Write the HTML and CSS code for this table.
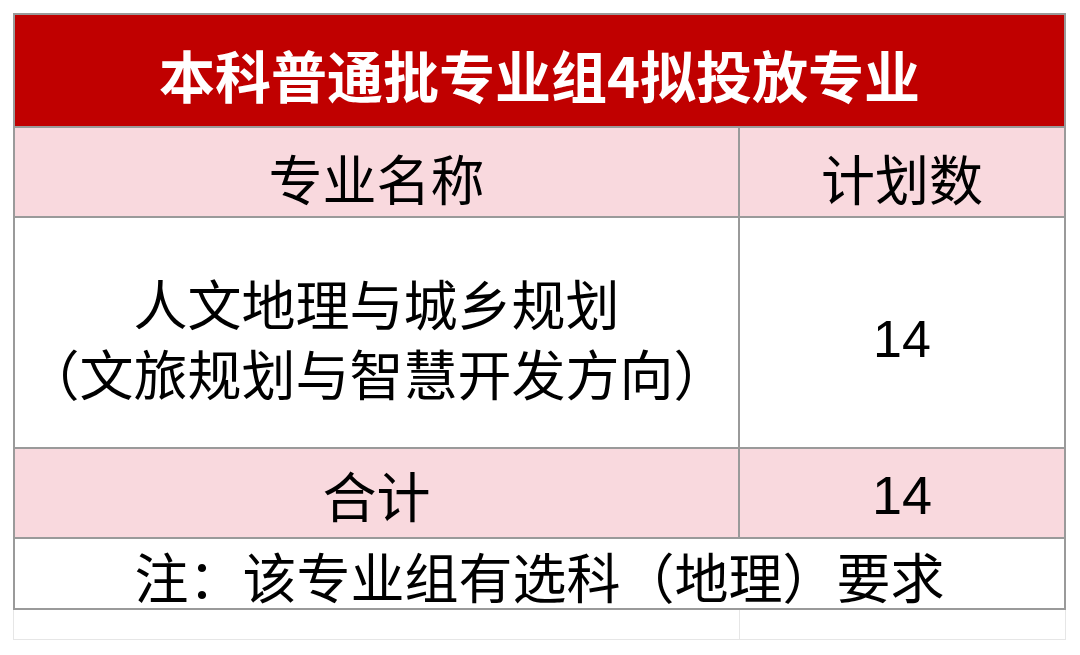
FILE: index.html
```html
<!DOCTYPE html>
<html lang="zh-CN">
<head>
<meta charset="utf-8">
<title>本科普通批专业组4拟投放专业</title>
<link rel="stylesheet" href="styles.css">
</head>
<body>
<div class="sheet">
  <div class="grid">
    <div class="cell title">本科普通批专业组4拟投放专业</div>
    <div class="cell head">专业名称</div>
    <div class="cell head">计划数</div>
    <div class="cell data">
      <span class="line">人文地理与城乡规划</span>
      <span class="line">（文旅规划与智慧开发方向）</span>
    </div>
    <div class="cell data num">14</div>
    <div class="cell total">合计</div>
    <div class="cell total num">14</div>
    <div class="cell note">注：该专业组有选科（地理）要求</div>
  </div>
  <div class="extra">
    <div class="extra-cell"></div>
    <div class="extra-cell"></div>
  </div>
</div>
</body>
</html>
```
FILE: styles.css
```css
html, body {
  margin: 0;
  padding: 0;
  background: #ffffff;
}
body {
  font-family: "Noto Sans CJK SC", "Noto Sans", sans-serif;
  color: #000000;
}
.sheet {
  width: 1053px;
  margin: 13px 0 0 13px;
}
.grid {
  display: grid;
  grid-template-columns: 723px 324px;
  grid-template-rows: 111px 88px 229px 88px 69px;
  gap: 2px;
  padding: 2px;
  background: #9a9a9a;
}
.cell {
  display: flex;
  align-items: center;
  justify-content: center;
  text-align: center;
  white-space: nowrap;
  box-sizing: border-box;
}
.title {
  grid-column: 1 / 3;
  background: #c00000;
  color: #ffffff;
  font-weight: 700;
  font-size: 56px;
  padding-top: 6px;
}
.head {
  background: #f9d9de;
  font-size: 54px;
  padding-top: 10px;
}
.data {
  background: #ffffff;
  font-size: 54px;
  flex-direction: column;
  line-height: 70px;
  padding-top: 10px;
}
.line {
  display: block;
  height: 70px;
  line-height: 70px;
  overflow: visible;
}
.num {
  font-family: "Liberation Sans", Arial, sans-serif;
  font-size: 52px;
  padding-top: 12px;
}
.total {
  background: #f9d9de;
  font-size: 54px;
  padding-top: 2px;
}
.total.num {
  padding-top: 4px;
}
.note {
  grid-column: 1 / 3;
  background: #ffffff;
  font-size: 54px;
  padding-top: 4px;
}
.extra {
  display: grid;
  grid-template-columns: 726px 327px;
  height: 30px;
}
.extra-cell {
  border-bottom: 1px solid #e6e6e6;
  border-left: 1px solid #e6e6e6;
}
.extra-cell:last-child {
  border-right: 1px solid #e6e6e6;
}
```
